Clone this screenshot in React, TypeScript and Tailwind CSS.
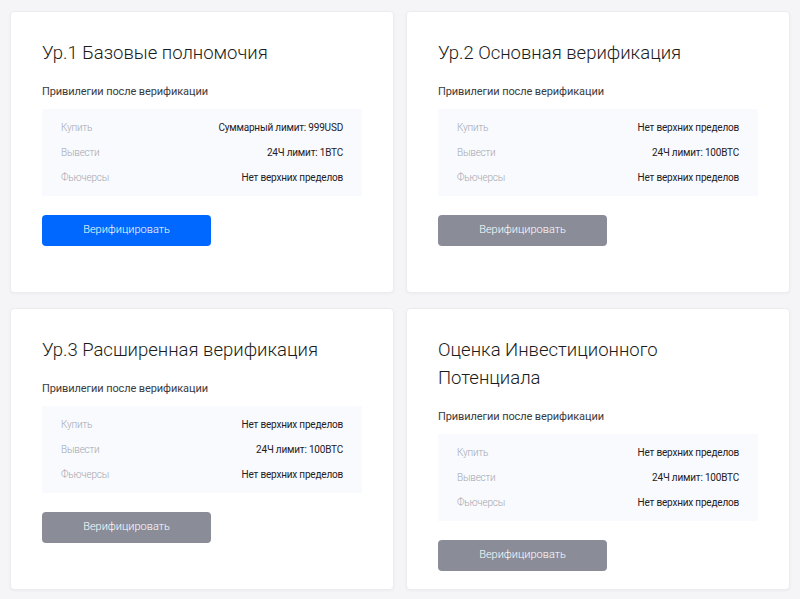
type Level = {
  title: string;
  buy: string;
  withdraw: string;
  futures: string;
  active?: boolean;
};

const levels: Level[] = [
  { title: "Ур.1 Базовые полномочия", buy: "Суммарный лимит: 999USD", withdraw: "24Ч лимит: 1BTC", futures: "Нет верхних пределов", active: true },
  { title: "Ур.2 Основная верификация", buy: "Нет верхних пределов", withdraw: "24Ч лимит: 100BTC", futures: "Нет верхних пределов" },
  { title: "Ур.3 Расширенная верификация", buy: "Нет верхних пределов", withdraw: "24Ч лимит: 100BTC", futures: "Нет верхних пределов" },
  { title: "Оценка Инвестиционного Потенциала", buy: "Нет верхних пределов", withdraw: "24Ч лимит: 100BTC", futures: "Нет верхних пределов" },
];

function Row({ label, value }: { label: string; value: string }) {
  return (
    <div className="flex h-[25px] items-center justify-between text-[10px] tracking-[-0.2px]">
      <span className="font-light text-[#a3a6b0]">{label}</span>
      <span className="text-[#1f2024]">{value}</span>
    </div>
  );
}

function LevelCard({ level }: { level: Level }) {
  return (
    <div className="min-h-[282px] rounded-[4px] border border-[#ececf0] bg-white px-[31px] pt-[27px] pb-[18px] shadow-[0_1px_3px_rgba(0,0,0,0.04)]">
      <h2 className="max-w-[290px] text-[18.5px] leading-[28px] font-light text-[#1b1c20]">{level.title}</h2>
      <p className="mt-[16px] text-[11px] leading-[18px] tracking-[-0.1px] text-[#3a3b40]">
        Привилегии после верификации
      </p>
      <div className="mt-[8px] bg-[#f9fafd] px-[19px] py-[6px]">
        <Row label="Купить" value={level.buy} />
        <Row label="Вывести" value={level.withdraw} />
        <Row label="Фьючерсы" value={level.futures} />
      </div>
      <button
        type="button"
        className={
          level.active
            ? "mt-[19px] h-[31px] w-[169px] rounded-[4px] bg-[#0068ff] text-[11px] font-light text-white"
            : "mt-[19px] h-[31px] w-[169px] rounded-[4px] bg-[#8a8c98] text-[11px] font-light text-white"
        }
      >
        Верифицировать
      </button>
    </div>
  );
}

export default function App() {
  return (
    <main className="min-h-screen bg-[#f5f5f7] px-[10px] pt-[11px] pb-[9px] font-['Roboto',sans-serif]">
      <div className="grid grid-cols-2 gap-x-[12px] gap-y-[15px]">
        {levels.map((level) => (
          <LevelCard key={level.title} level={level} />
        ))}
      </div>
    </main>
  );
}
